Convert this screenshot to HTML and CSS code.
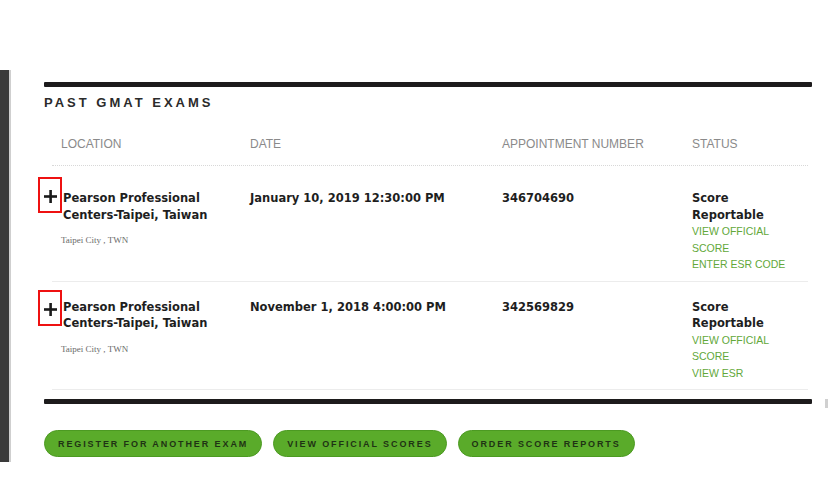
FILE: index.html
```html
<!DOCTYPE html>
<html>
<head>
<meta charset="utf-8">
<link rel="stylesheet" href="styles.css">
</head>
<body>
<div class="page">
  <div class="sidebar"></div>
  <div class="main">
    <div class="rule-thick top"></div>
    <h2 class="title">PAST GMAT EXAMS</h2>
    <div class="table">
      <div class="row head">
        <div>LOCATION</div>
        <div>DATE</div>
        <div>APPOINTMENT NUMBER</div>
        <div>STATUS</div>
      </div>
      <div class="row item first">
        <div class="expander">
          <svg width="13" height="13" viewBox="0 0 13 13"><rect x="5.3" y="0" width="2.6" height="13" fill="#1a1a1a"/><rect x="0" y="5.2" width="13" height="2.6" fill="#1a1a1a"/></svg>
        </div>
        <div class="loc">
          <div class="strong">Pearson Professional Centers-Taipei, Taiwan</div>
          <div class="city">Taipei City , TWN</div>
        </div>
        <div class="strong">January 10, 2019 12:30:00 PM</div>
        <div class="strong">346704690</div>
        <div class="status">
          <div class="strong">Score Reportable</div>
          <a class="link">VIEW OFFICIAL SCORE</a>
          <a class="link">ENTER ESR CODE</a>
        </div>
      </div>
      <div class="row item second">
        <div class="expander">
          <svg width="13" height="13" viewBox="0 0 13 13"><rect x="5.3" y="0" width="2.6" height="13" fill="#1a1a1a"/><rect x="0" y="5.2" width="13" height="2.6" fill="#1a1a1a"/></svg>
        </div>
        <div class="loc">
          <div class="strong">Pearson Professional Centers-Taipei, Taiwan</div>
          <div class="city">Taipei City , TWN</div>
        </div>
        <div class="strong">November 1, 2018 4:00:00 PM</div>
        <div class="strong">342569829</div>
        <div class="status">
          <div class="strong">Score Reportable</div>
          <a class="link">VIEW OFFICIAL SCORE</a>
          <a class="link">VIEW ESR</a>
        </div>
      </div>
    </div>
    <div class="bottom-line">
      <div class="rule-thick"></div>
      <div class="edge-mark"></div>
    </div>
    <div class="buttons">
      <a class="btn">REGISTER FOR ANOTHER EXAM</a>
      <a class="btn">VIEW OFFICIAL SCORES</a>
      <a class="btn">ORDER SCORE REPORTS</a>
    </div>
  </div>
</div>
</body>
</html>
```
FILE: styles.css
```css
html, body {
  margin: 0;
  padding: 0;
  background: #ffffff;
}
body {
  width: 828px;
  height: 500px;
  overflow: hidden;
  font-family: "Liberation Sans", Arial, sans-serif;
  color: #1e1e1e;
}
.page {
  display: flex;
  margin-top: 70px;
  height: 392px;
}
.sidebar {
  width: 9px;
  background: #3a3a3a;
  border-right: 2px solid #cfcfcf;
  flex: none;
}
.main {
  padding-left: 33px;
  width: 768px;
  flex: none;
}
.rule-thick {
  height: 5px;
  background: #1d1b1c;
  border-radius: 1px;
  width: 768px;
  flex: none;
}
.rule-thick.top {
  margin-top: 12px;
}
.title {
  margin: 8px 0 0 0;
  font-size: 13px;
  line-height: 16px;
  font-weight: bold;
  letter-spacing: 3px;
  color: #2b2b2b;
}
.table {
  margin-left: 8px;
  width: 756px;
}
.row {
  display: grid;
  grid-template-columns: 189px 252px 190px 1fr;
  padding-left: 9px;
  position: relative;
}
.row.head {
  font-size: 12px;
  line-height: 14px;
  color: #8a8a8a;
  padding-top: 26px;
  padding-bottom: 14px;
  border-bottom: 1px dotted #d8d8d8;
}
.row.item {
  font-size: 12px;
  line-height: 16.5px;
  border-bottom: 1px solid #ececec;
  padding-bottom: 8px;
}
.row.first { padding-top: 24px; }
.row.second { padding-top: 17px; }
.strong {
  font-family: "DejaVu Sans", Verdana, sans-serif;
  font-weight: bold;
  font-size: 11.5px;
  color: #1e1e1e;
}
.loc .strong {
  padding-left: 2px;
  padding-right: 36px;
}
.status .strong {
  padding-right: 30px;
}
.city {
  font-family: "Liberation Serif", "Times New Roman", serif;
  font-size: 9px;
  color: #6a6a6a;
  margin-top: 9px;
}
.link {
  display: block;
  color: #62a83a;
  font-size: 10.5px;
  text-decoration: none;
}
.expander {
  position: absolute;
  left: -14px;
  top: 11px;
  width: 24px;
  height: 36px;
  border: 2px solid #ee1111;
  display: flex;
  align-items: flex-start;
  justify-content: center;
  padding-top: 11px;
  box-sizing: border-box;
}
.second .expander {
  top: 8px;
  height: 36px;
}
.bottom-line {
  display: flex;
  align-items: flex-start;
  margin-top: 9px;
}
.edge-mark {
  margin-left: 13px;
  width: 3px;
  height: 9px;
  background: #d0d0d0;
  flex: none;
}
.buttons {
  display: flex;
  gap: 11px;
  margin-top: 22px;
}
.btn {
  display: inline-flex;
  align-items: center;
  height: 27px;
  padding: 0 13px;
  border-radius: 14px;
  background: #5aab2a;
  border: 1px solid #4c9a22;
  box-sizing: border-box;
  color: #1f3314;
  font-size: 9px;
  font-weight: bold;
  letter-spacing: 1.9px;
  text-decoration: none;
  white-space: nowrap;
}
```
